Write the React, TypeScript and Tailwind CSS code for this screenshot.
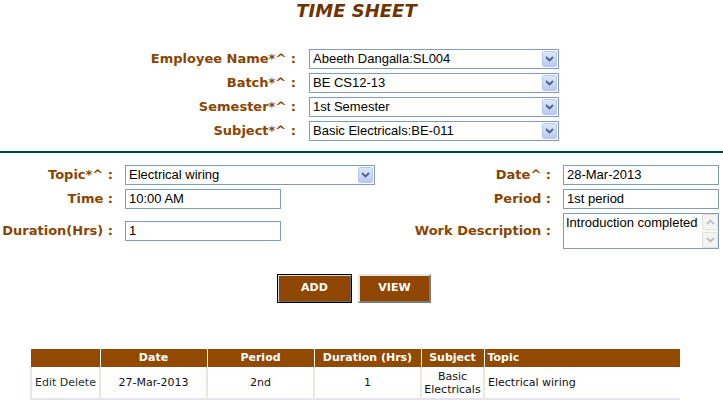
import React from 'react'

const label = "font-['DejaVu_Sans',Verdana,sans-serif] text-[13px] font-bold text-[#8a4500] text-right whitespace-nowrap"
const field = "font-['Liberation_Sans',Arial,sans-serif] text-[13px] text-black"

function Chevron({ up, muted }: { up?: boolean; muted?: boolean }) {
  return (
    <svg width="9" height="6" viewBox="0 0 9 6" className={up ? 'rotate-180' : ''}>
      <path d="M1 1 L4.5 4.5 L8 1" fill="none" stroke={muted ? '#b9c1cc' : '#4d6185'} strokeWidth="1.8" />
    </svg>
  )
}

function Select({ value, width }: { value: string; width: string }) {
  return (
    <div className={`flex h-[20px] items-center border border-[#7f9db9] bg-white ${width}`}>
      <span className={`flex-1 truncate pl-[3px] ${field}`}>{value}</span>
      <div className="mr-px flex h-[16px] w-[15px] items-center justify-center rounded-[2px] border border-[#b7c8f0] bg-gradient-to-b from-[#dde6fd] to-[#b9cbf6]">
        <Chevron />
      </div>
    </div>
  )
}

function Input({ value }: { value: string }) {
  return (
    <div className={`flex h-[20px] w-[156px] items-center border border-[#7f9db9] bg-white pl-[3px] ${field}`}>
      {value}
    </div>
  )
}

export default function App() {
  const rows = [
    ['Employee Name*^ :', 'Abeeth Dangalla:SL004'],
    ['Batch*^ :', 'BE CS12-13'],
    ['Semester*^ :', '1st Semester'],
    ['Subject*^ :', 'Basic Electricals:BE-011'],
  ]

  return (
    <div className="h-[403px] w-[723px] overflow-hidden bg-white">
      <h1 className="text-center font-['DejaVu_Sans',Verdana,sans-serif] text-[18px] font-bold italic leading-[21px] text-[#6e3400]">
        <span className="mr-[10px]">TIME SHEET</span>
      </h1>

      <div className="mt-[28px] grid grid-cols-[296px_250px] gap-x-[13px] gap-y-[4px]">
        {rows.map(([l, v]) => (
          <React.Fragment key={l}>
            <div className={`flex h-[20px] items-center justify-end ${label}`}>{l}</div>
            <Select value={v} width="w-[250px]" />
          </React.Fragment>
        ))}
      </div>

      <div className="mt-[10px] h-[2px] w-full bg-[#003f3f]" />

      <div className="mt-[12px] grid grid-cols-[113px_250px_164px_156px] items-center gap-x-[12px] gap-y-[4px]">
        <div className={`flex h-[20px] items-center justify-end ${label}`}>Topic*^ :</div>
        <Select value="Electrical wiring" width="w-[250px]" />
        <div className={`flex h-[20px] items-center justify-end ${label}`}>Date^ :</div>
        <Input value="28-Mar-2013" />

        <div className={`flex h-[20px] items-center justify-end ${label}`}>Time :</div>
        <Input value="10:00 AM" />
        <div className={`flex h-[20px] items-center justify-end ${label}`}>Period :</div>
        <Input value="1st period" />

        <div className={`flex h-[20px] items-center justify-end ${label}`}>Duration(Hrs) :</div>
        <Input value="1" />
        <div className={`flex h-[20px] items-center justify-end ${label}`}>Work Description :</div>
        <div className="flex h-[36px] w-[156px] border border-[#7f9db9] bg-white">
          <div className={`flex-1 pl-[2px] pt-px leading-[15px] ${field}`}>Introduction completed</div>
          <div className="flex w-[16px] flex-col justify-between bg-[#f7f7f3]">
            <div className="flex h-[16px] items-center justify-center rounded-[2px] border border-[#e2e2dc] bg-[#f4f4f0]">
              <Chevron up muted />
            </div>
            <div className="flex h-[16px] items-center justify-center rounded-[2px] border border-[#e2e2dc] bg-[#f4f4f0]">
              <Chevron muted />
            </div>
          </div>
        </div>
      </div>

      <div className="mt-[25px] flex gap-[6px] pl-[277px] font-['DejaVu_Sans',Verdana,sans-serif] text-[11px] font-bold text-white">
        <button className="h-[29px] w-[75px] border border-black bg-[#8f4700] shadow-[inset_1px_1px_0_#d9d9d9,inset_-1px_-1px_0_#6b6b6b]">
          ADD
        </button>
        <button className="h-[29px] w-[73px] border-2 border-t-[#e6e6e6] border-l-[#e6e6e6] border-r-[#7a7a7a] border-b-[#7a7a7a] bg-[#8f4700]">
          VIEW
        </button>
      </div>

      <table className="ml-[30px] mt-[46px] w-[650px] table-fixed border-collapse font-['DejaVu_Sans',Verdana,sans-serif] text-[11px]">
        <thead>
          <tr className="h-[18px] bg-[#924900] font-bold text-white">
            <th className="w-[69px] border-r border-white"></th>
            <th className="w-[107px] border-r border-white">Date</th>
            <th className="w-[107px] border-r border-white">Period</th>
            <th className="w-[107px] border-r border-white">Duration (Hrs)</th>
            <th className="w-[63px] border-r border-white">Subject</th>
            <th className="pl-[3px] text-left">Topic</th>
          </tr>
        </thead>
        <tbody>
          <tr className="h-[32px] border-b-2 border-[#e6e3f0] leading-[13px] text-[#111]">
            <td className="border-l-2 border-r-2 border-l-[#e6e3f0] border-r-[#efe7d8] pl-[3px] text-[#1c3232]">Edit Delete</td>
            <td className="border-r-2 border-[#efe7d8] text-center">27-Mar-2013</td>
            <td className="border-r-2 border-[#efe7d8] text-center">2nd</td>
            <td className="border-r-2 border-[#efe7d8] text-center">1</td>
            <td className="border-r-2 border-[#efe7d8] text-center">Basic Electricals</td>
            <td className="pl-[3px]">Electrical wiring</td>
          </tr>
        </tbody>
      </table>
    </div>
  )
}
